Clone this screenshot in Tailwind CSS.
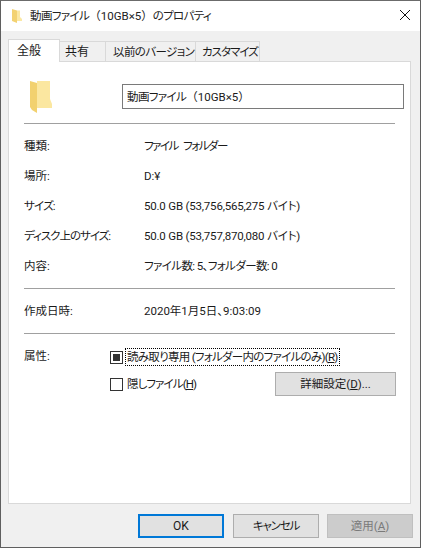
<!DOCTYPE html>
<html lang="ja">
<head>
    <meta charset="UTF-8">
    <title>動画ファイル（10GB×5）のプロパティ</title>
    <script src="https://cdn.jsdelivr.net/npm/@tailwindcss/browser@4"></script>
</head>
<body class="bg-white">
    <div class="w-[421px] h-[548px] flex flex-col overflow-hidden border border-t-[#6b6b6b] border-[#5f5f5f] bg-[#f0f0f0] font-['Roboto','Noto_Sans_CJK_JP',sans-serif] [font-feature-settings:'palt'] text-[11.5px] leading-[16px] text-[#1a1a1a]">
        <!-- タイトルバー -->
        <div class="h-[30px] shrink-0 bg-white flex items-center pl-[10px] pr-[10px]">
            <svg class="w-[12px] h-[14px] shrink-0" viewBox="0 0 12 14"><path d="M1 0 L6 1.5 V14 L1 12 Z" fill="#f3d272"/><path d="M6 1.5 H9 V8 L11 10 V12 H6 Z" fill="#fbe8a4"/></svg>
            <span class="ml-[7px] text-[#222] whitespace-nowrap"><span class="tracking-[-0.6px]">動画ファイル</span><span class="[font-feature-settings:normal]">（</span>10GB×5<span class="[font-feature-settings:normal]">）</span><span class="tracking-[-0.7px]">のプロパティ</span></span>
            <svg class="ml-auto mb-[2px] w-[10px] h-[10px]" viewBox="0 0 10 10"><path d="M0 0 L10 10 M10 0 L0 10" stroke="#111" stroke-width="1" fill="none"/></svg>
        </div>

        <!-- タブ -->
        <div class="h-[30px] shrink-0 flex items-end pl-[7px]">
            <div class="relative z-10 h-[23px] w-[52px] -mb-px bg-white border border-b-0 border-[#d9d9d9] pl-[8px] flex items-center text-[12px]">全般</div>
            <div class="h-[20px] w-[46px] bg-[#f0f0f0] border-t border-r border-[#d9d9d9] pl-[5px] flex items-center text-[12px]">共有</div>
            <div class="h-[20px] w-[90px] bg-[#f0f0f0] border-t border-r border-[#d9d9d9] pl-[7px] flex items-center whitespace-nowrap tracking-[-0.6px]">以前のバージョン</div>
            <div class="h-[20px] w-[64px] bg-[#f0f0f0] border-t border-r border-[#d9d9d9] pl-[6px] flex items-center whitespace-nowrap tracking-[-1px]">カスタマイズ</div>
        </div>

        <!-- パネル -->
        <div class="ml-[7px] w-[403px] h-[443px] shrink-0 bg-white border border-[#d9d9d9] px-[15px]">
            <div class="h-[61px] flex items-start">
                <svg class="mt-[19px] ml-[6px] w-[22px] h-[32px] shrink-0" viewBox="0 0 22 32"><path d="M0 0 L7 2 V32 L2 29 L0 26 Z" fill="#f2d16f"/><path d="M7 0 H20 V18 L22 23 V27 H7 Z" fill="#fbe7a0"/></svg>
                <div class="mt-[22px] ml-[70px] w-[282px] h-[25px] shrink-0 border border-[#7a7a7a] pl-[4px] flex items-center whitespace-nowrap"><span class="tracking-[-0.6px]">動画ファイル</span><span class="[font-feature-settings:normal]">（</span>10GB×5<span class="[font-feature-settings:normal]">）</span></div>
            </div>
            <div class="h-px bg-[#a0a0a0]"></div>

            <div class="pt-[7px]">
                <div class="h-[30px] flex items-center"><span class="w-[120px]">種類:</span><span class="tracking-[-1.5px] [word-spacing:4px]">ファイル フォルダー</span></div>
                <div class="h-[30px] flex items-center"><span class="w-[120px]">場所:</span><span>D:¥</span></div>
                <div class="h-[30px] flex items-center"><span class="w-[120px] tracking-[-0.8px]">サイズ:</span><span class="tracking-[-0.2px]">50.0 GB (53,756,565,275 バイト)</span></div>
                <div class="h-[30px] flex items-center"><span class="w-[120px] tracking-[-1px]">ディスク上のサイズ:</span><span class="tracking-[-0.2px]">50.0 GB (53,757,870,080 バイト)</span></div>
                <div class="h-[30px] flex items-center"><span class="w-[120px]">内容:</span><span class="tracking-[-0.6px]">ファイル数: 5、フォルダー数: 0</span></div>
            </div>
            <div class="mt-[7px] h-px bg-[#a0a0a0]"></div>

            <div class="h-[44px] flex items-center"><span class="w-[120px]">作成日時:</span><span>2020年1月5日、9:03:09</span></div>
            <div class="h-px bg-[#a0a0a0]"></div>

            <div class="pt-[13px] flex">
                <span class="w-[86px] shrink-0 mt-[1px]">属性:</span>
                <div class="flex-1">
                    <div class="flex items-center h-[20px]">
                        <span class="w-[13px] h-[13px] border border-[#333] flex items-center justify-center shrink-0"><span class="w-[7px] h-[7px] bg-[#333]"></span></span>
                        <span class="ml-[2px] px-px h-[18px] flex items-center border border-dotted border-black whitespace-nowrap tracking-[-0.72px]">読み取り専用 (フォルダー内のファイルのみ)(<span class="underline">R</span>)</span>
                    </div>
                    <div class="flex items-center h-[24px] mt-[5px]">
                        <span class="w-[13px] h-[13px] border border-[#333] shrink-0"></span>
                        <span class="ml-[4px] whitespace-nowrap tracking-[-0.9px]">隠しファイル(<span class="underline">H</span>)</span>
                        <button class="ml-auto mr-[-1px] w-[121px] h-[24px] bg-[#e1e1e1] border border-[#adadad]">詳細設定(<span class="underline">D</span>)...</button>
                    </div>
                </div>
            </div>
        </div>

        <!-- ボタン -->
        <div class="flex-1 flex items-start justify-end pt-[10px] pr-[7px]">
            <button class="w-[86px] h-[24px] bg-[#e1e1e1] border-2 border-[#0078d7] text-[12px]">OK</button>
            <button class="ml-[9px] w-[86px] h-[24px] bg-[#e1e1e1] border border-[#adadad] tracking-[-1.2px]">キャンセル</button>
            <button class="ml-[8px] w-[86px] h-[24px] bg-[#cccccc] border border-[#bfbfbf] text-[#7a7a7a]">適用(<span class="underline">A</span>)</button>
        </div>
    </div>
</body>
</html>
